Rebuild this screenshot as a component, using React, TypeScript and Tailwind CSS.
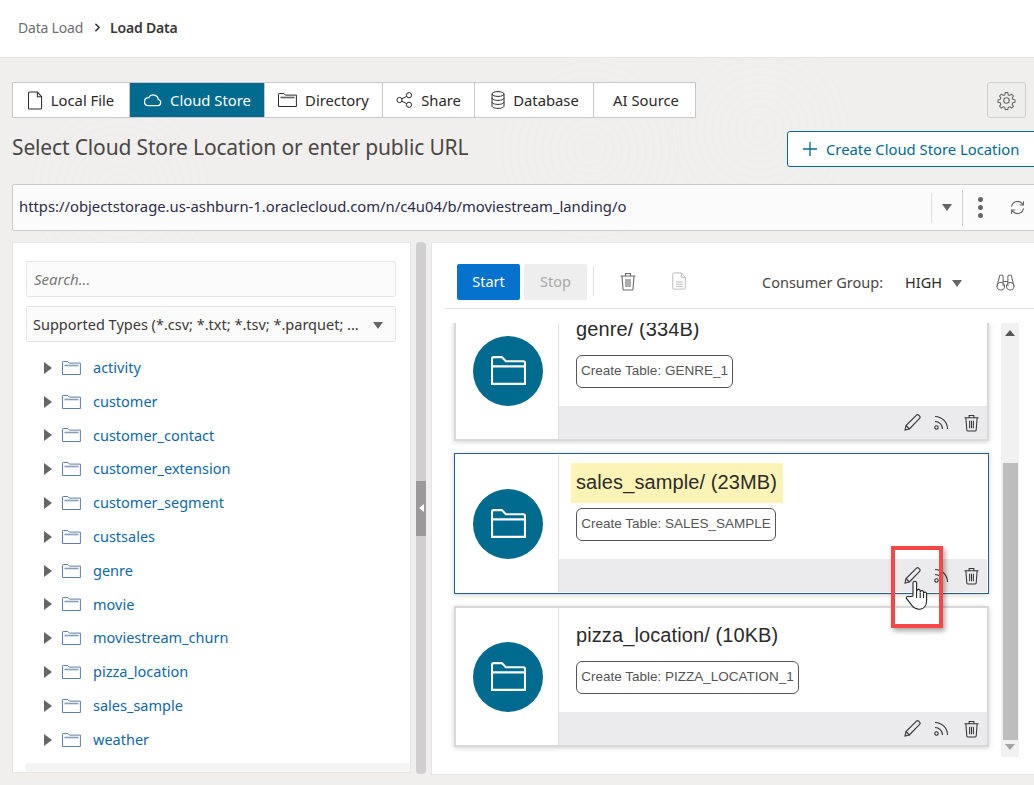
import React from "react";
import { ChevronRight } from "lucide-react";

const Sans = "font-['Noto_Sans','Open_Sans',sans-serif]";

function FileIco({ className = "", lines }: { className?: string; lines?: boolean }) {
  return (
    <svg viewBox="0 0 16 20" className={className} fill="none" stroke="currentColor" strokeWidth="1.1">
      <path d="M1.5 1h8.500l4.500 5v12a1 1 0 0 1-1 1h-12a1 1 0 0 1-1-1V2a1 1 0 0 1 1-1z" />
      <path d="M10 1v5h4.500" />
      {lines && <path d="M4 11h8M4 13.500h8M4 16h8" />}
    </svg>
  );
}
function CloudIco({ className = "" }: { className?: string }) {
  return (
    <svg viewBox="0 0 20 14" className={className} fill="none" stroke="currentColor" strokeWidth="1.3">
      <path d="M5 13h10.500a3.300 3.300 0 0 0 .6-6.500A5.400 5.400 0 0 0 6 4.500 4.300 4.300 0 0 0 5 13z" />
    </svg>
  );
}
function FolderIco({ className = "" }: { className?: string }) {
  return (
    <svg viewBox="0 0 19 14" className={className} fill="none" stroke="currentColor" strokeWidth="1">
      <path d="M.5 13.500V1.200a.7.7 0 0 1 .7-.7h4.600l1.600 1.600h11v11.400z" />
      <path d="M2.500 4.500h14" strokeWidth="1.600" opacity=".75" />
    </svg>
  );
}
function ShareIco({ className = "" }: { className?: string }) {
  return (
    <svg viewBox="0 0 17 16" className={className} fill="none" stroke="currentColor" strokeWidth="1">
      <circle cx="3.500" cy="8" r="2.600" />
      <circle cx="13" cy="3.200" r="2.600" />
      <circle cx="13" cy="12.800" r="2.600" />
      <path d="M5.800 6.800l4.900-2.400M5.800 9.200l4.900 2.400" />
    </svg>
  );
}
function DbIco({ className = "" }: { className?: string }) {
  return (
    <svg viewBox="0 0 14 18" className={className} fill="none" stroke="currentColor" strokeWidth="1">
      <ellipse cx="7" cy="3" rx="6" ry="2.400" />
      <path d="M1 3v12c0 1.400 2.700 2.400 6 2.400s6-1 6-2.400V3M1 7c0 1.400 2.700 2.400 6 2.400S13 8.400 13 7M1 11c0 1.400 2.700 2.400 6 2.400s6-1 6-2.400" />
    </svg>
  );
}
function TrashIco({ className = "" }: { className?: string }) {
  return (
    <svg viewBox="0 0 16 18" className={className} fill="none" stroke="currentColor" strokeWidth="1.100">
      <path d="M.5 3.500h15M5.500 3.500V1h5v2.500M2 3.500l1 13a1 1 0 0 0 1 1h8a1 1 0 0 0 1-1l1-13" />
      <path d="M6 6.500v8M8 6.500v8M10 6.500v8" />
    </svg>
  );
}
function PencilIco({ className = "" }: { className?: string }) {
  return (
    <svg viewBox="0 0 17 17" className={className} fill="none" stroke="currentColor" strokeWidth="1.100">
      <path d="M1 16l1-4.500L12.500 1.200a1.500 1.500 0 0 1 2.100 0l1 1a1.500 1.500 0 0 1 0 2.100L5.400 15z" />
      <path d="M2 11.500l3.400 3.500" />
    </svg>
  );
}
function RssIco({ className = "" }: { className?: string }) {
  return (
    <svg viewBox="0 0 15 15" className={className} fill="none" stroke="currentColor" strokeWidth="1.100">
      <circle cx="2.500" cy="12.500" r="1.700" />
      <path d="M1 6.500a7.500 7.500 0 0 1 7.500 7.500M1 1.500A12.500 12.500 0 0 1 13.500 14" />
    </svg>
  );
}
function CardFolder({ className = "" }: { className?: string }) {
  return (
    <svg viewBox="0 0 34 28" className={className} fill="none" stroke="currentColor" strokeWidth="2">
      <path d="M1 27V2.500A1.500 1.500 0 0 1 2.500 1h8l4 4h17A1.500 1.500 0 0 1 33 6.500V27z" />
      <path d="M1 10h32" />
    </svg>
  );
}
function Caret({ className = "" }: { className?: string }) {
  return <span className={`block w-0 h-0 border-x-[5.500px] border-x-transparent border-t-[7px] border-t-[#666] ${className}`} />;
}

function Tab({ icon, label, active, cls }: { icon?: React.ReactNode; label: string; active?: boolean; cls: string }) {
  return (
    <div className={`${cls} flex items-center justify-center gap-[8px] text-[14.800px] border-r last:border-r-0 border-[#c9c9c9] ${active ? "bg-[#006b8f] text-white" : "text-[#2c2a28]"}`}>
      {icon}
      <span>{label}</span>
    </div>
  );
}

const folders = ["activity","customer","customer_contact","customer_extension","customer_segment","custsales","genre","movie","moviestream_churn","pizza_location","sales_sample","weather"];

function Card({ title, table, selected, hl, w }: { title: string; table: string; selected?: boolean; hl?: boolean; w: string }) {
  return (
    <div className={`h-[141px] w-[535px] shrink-0 flex bg-white border-2 shadow-[0_1px_5px_rgba(0,0,0,0.18)] ${selected ? "border-white outline outline-[#1f5f93] -outline-offset-1" : "border-[#d9d9d9]"}`}>
      <div className="w-[103px] shrink-0 border-r border-[#e2e2e2] pl-[2px] flex items-center justify-center">
        <div className="w-[70px] h-[70px] rounded-full bg-[#006b8f] flex items-center justify-center text-white">
          <CardFolder className="w-[35px] h-[29px]" />
        </div>
      </div>
      <div className="flex-1 flex flex-col">
        <div className="flex-1 pl-[17px] font-['Liberation_Sans',sans-serif]">
          <div className={`h-[40px] mt-[8px] inline-flex items-center pb-[2px] text-[20px] tracking-[0.1px] text-[#2b2b2b] pl-[5px] pr-[6px] -ml-[5px] ${hl ? "bg-[#fbf4b6]" : ""}`}>{title}</div>
          <div className={`${w} h-[33px] mt-[5px] border border-[#555] rounded-[6px] flex items-center justify-center text-[13.500px] text-[#555] whitespace-nowrap`}>{table}</div>
        </div>
        <div className="h-[33px] bg-[#ebebed] flex items-center justify-end pr-[8px] text-[#333]">
          <PencilIco className="w-[17px] h-[17px]" />
          <RssIco className="w-[15px] h-[15px] ml-[13px]" />
          <TrashIco className="w-[15px] h-[18px] ml-[15px]" />
        </div>
      </div>
    </div>
  );
}

const ringSets = [
  { cx: 120, cy: 190 },
  { cx: 590, cy: 150 },
  { cx: 760, cy: 130 },
];

export default function App() {
  return (
    <div className={`w-[1034px] h-[785px] overflow-hidden bg-[#f0efed] flex flex-col relative isolate ${Sans}`}>
      <svg className="absolute inset-0 -z-10 w-full h-full" fill="none" stroke="#eeedeb" strokeWidth="1">
        {ringSets.map((s, i) => (
          <g key={i}>
            {[8, 16, 24, 32, 40, 48, 56, 64, 72, 80, 88].map((r) => (
              <circle key={r} cx={s.cx} cy={s.cy} r={r} />
            ))}
          </g>
        ))}
      </svg>
      <header className="h-[58px] shrink-0 bg-white border-b border-[#e4e4e4] flex items-center pl-[18px] text-[14px] tracking-[-0.2px] pb-[3px]">
        <span className="text-[#6f6f6f]">Data Load</span>
        <ChevronRight className="w-[13px] h-[13px] ml-[8px] mr-[6px] text-[#333]" strokeWidth={3} />
        <span className="font-semibold text-[#3b3936]">Load Data</span>
      </header>

      <div className="pl-[12px] pt-[24px] flex items-start justify-between pr-[8px]">
        <div className="flex h-[36px] w-[684px] border border-[#c9c9c9] bg-white">
          <Tab cls="w-[117px]" label="Local File" icon={<FileIco className="w-[15px] h-[19px]" />} />
          <Tab cls="w-[135px]" active label="Cloud Store" icon={<CloudIco className="w-[19px] h-[14px]" />} />
          <Tab cls="w-[118px]" label="Directory" icon={<FolderIco className="w-[19px] h-[14px]" />} />
          <Tab cls="w-[92px]" label="Share" icon={<ShareIco className="w-[17px] h-[16px]" />} />
          <Tab cls="w-[119px] pl-[2px]" label="Database" icon={<DbIco className="w-[14px] h-[18px]" />} />
          <Tab cls="flex-1 pl-[3px]" label="AI Source" />
        </div>
        <div className="w-[39px] h-[36px] border border-[#cfcfcf] rounded-[3px] bg-[#eeeeec] flex items-center justify-center text-[#666]">
          <svg viewBox="0 0 24 24" className="w-[19px] h-[19px]" fill="none" stroke="currentColor" strokeWidth="1.400">
            <path d="M10.300 1.500h3.400l.6 3 2 .8 2.500-1.700 2.400 2.400-1.700 2.500.8 2 3 .6v3.400l-3 .6-.8 2 1.700 2.500-2.400 2.400-2.500-1.700-2 .8-.6 3h-3.400l-.6-3-2-.8-2.500 1.700-2.400-2.400 1.700-2.500-.8-2-3-.6v-3.400l3-.6.8-2-1.700-2.500 2.400-2.400 2.500 1.700 2-.8z" transform="translate(.6 .6) scale(.95)" />
            <circle cx="12" cy="12" r="3.500" />
          </svg>
        </div>
      </div>

      <div className="pl-[12px] flex items-start mt-[13px] h-[48px]">
        <h1 className="text-[21px] leading-[32px] tracking-[-0.15px] font-normal text-[#4a4745] w-[775px] shrink-0 whitespace-nowrap">Select Cloud Store Location or enter public URL</h1>
        <div className="shrink-0 w-[260px] h-[36px] border border-[#006b8f] rounded-l-[3px] bg-white text-[#006b8f] flex items-center pl-[15px] gap-[9px] text-[14.800px] whitespace-nowrap">
          <svg viewBox="0 0 14 14" className="w-[14px] h-[14px]" stroke="currentColor" strokeWidth="1.300"><path d="M7 0v14M0 7h14" /></svg>
          <span className="pt-[1px]">Create Cloud Store Location</span>
        </div>
      </div>

      <div className="ml-[12px] mt-[5px] h-[47px] w-[1040px] shrink-0 bg-[#fbfbfb] border border-[#cacaca] rounded-[2px] flex items-center pl-[6px] text-[14.800px] text-[#2d2b4a]">
        <span className="w-[912px] shrink-0 pb-[2px]">https://objectstorage.us-ashburn-1.oraclecloud.com/n/c4u04/b/moviestream_landing/o</span>
        <div className="h-[30px] border-l border-[#dedede] w-[31px] flex items-center justify-center"><Caret /></div>
        <div className="h-[36px] border-l border-[#cfcfcf] w-[36px] flex flex-col items-center justify-center gap-[3px]">
          <span className="w-[5px] h-[5px] rounded-full bg-[#666]" />
          <span className="w-[5px] h-[5px] rounded-full bg-[#666]" />
          <span className="w-[5px] h-[5px] rounded-full bg-[#666]" />
        </div>
        <svg viewBox="0 0 20 20" className="w-[17px] h-[17px] ml-[11px] text-[#666]" fill="none" stroke="currentColor" strokeWidth="1.300">
          <path d="M3 9a7 7 0 0 1 12-4l2 2M17 11a7 7 0 0 1-12 4l-2-2" />
          <path d="M17 2.500V7h-4.500M3 17.500V13h4.500" />
        </svg>
      </div>

      <div className="flex-1 min-h-0 flex pl-[12px] pt-[11px] pb-[10px]">
        <aside className="w-[399px] mb-[2px] bg-white border border-[#e6e6e6] flex flex-col pl-[13px] pr-[14px] pt-[18px] shrink-0">
          <div className="h-[36px] border border-[#e6e6e6] rounded-[2px] bg-[#fbfbfb] flex items-center pl-[7px] text-[15px] italic text-[#7a7a7a] shrink-0">Search...</div>
          <div className="h-[36px] mt-[9px] border border-[#e6e6e6] rounded-[2px] bg-[#fbfbfb] flex items-center pl-[6px] pr-[12px] pt-[2px] justify-between text-[14.500px] text-[#3b3936] shrink-0">
            <span className="whitespace-nowrap">Supported Types (*.csv; *.txt; *.tsv; *.parquet; ...</span>
            <Caret />
          </div>
          <ul className="mt-[9px] flex flex-col flex-1">
            {folders.map((f) => (
              <li key={f} className="h-[33.800px] flex items-center shrink-0 text-[14.500px] text-[#0e69a8]">
                <span className="block ml-[18px] w-0 h-0 border-y-[6px] border-y-transparent border-l-[8px] border-l-[#666]" />
                <FolderIco className="w-[19px] h-[14px] ml-[10px] text-[#5f7fa8]" />
                <span className="ml-[12px]">{f}</span>
              </li>
            ))}
          </ul>
          <div className="-mr-[14px] h-[9px] bg-[#f5f5f5]" />
        </aside>

        <div className="w-[20px] shrink-0 flex justify-center">
          <div className="w-[10px] mb-[1px] rounded-[4px] bg-[#cfcfcf] flex flex-col justify-center">
            <div className="h-[55px] bg-[#9a9a9a] flex items-center justify-center">
              <span className="block w-0 h-0 border-y-[4px] border-y-transparent border-r-[5px] border-r-white" />
            </div>
          </div>
        </div>

        <main className="flex-1 -mr-[4px] bg-white border border-[#e6e6e6] flex flex-col min-w-0 pl-[13px]">
          <div className="h-[66px] shrink-0 border-b border-[#e3e3e3] flex items-start pl-[12px] pt-[21px] text-[14.500px]">
            <div className="w-[63px] h-[36px] rounded-[2px] bg-[#0572ce] text-white flex items-center justify-center">Start</div>
            <div className="w-[63px] h-[36px] ml-[4px] rounded-[2px] bg-[#eeeeee] text-[#a8a8a8] flex items-center justify-center">Stop</div>
            <div className="w-px h-[30px] mt-[2px] bg-[#e0e0e0] ml-[6px]" />
            <TrashIco className="w-[16px] h-[19px] mt-[8px] ml-[26px] text-[#6a6a6a]" />
            <FileIco lines className="w-[15px] h-[18px] mt-[8px] ml-[36px] text-[#bdbdbd]" />
            <span className="ml-[75px] mt-[1px] h-[36px] flex items-center text-[#4a4745]">Consumer Group:</span>
            <span className="ml-[22px] mt-[1px] h-[36px] flex items-center text-[#2c2a28]">HIGH</span>
            <Caret className="ml-[10px] mt-[16px]" />
            <svg viewBox="0 0 20 18" className="w-[19px] h-[17px] mt-[10px] ml-[34px] text-[#666]" fill="none" stroke="currentColor" strokeWidth="1.100">
              <circle cx="5" cy="13" r="4" />
              <circle cx="15" cy="13" r="4" />
              <path d="M1 13L3.500 3a2 2 0 0 1 4 0v10M19 13L16.500 3a2 2 0 0 0-4 0v10M7.500 8h5" />
            </svg>
          </div>
          <div className="flex mt-[14px] h-[434px] overflow-hidden relative">
            <div className="w-[556px] shrink-0 pl-[9px] overflow-hidden">
              <div className="flex flex-col gap-[12px] -mt-[23px]">
                <Card title="genre/ (334B)" table="Create Table: GENRE_1" w="w-[157px]" />
                <Card title="sales_sample/ (23MB)" table="Create Table: SALES_SAMPLE" w="w-[200px]" selected hl />
                <Card title="pizza_location/ (10KB)" table="Create Table: PIZZA_LOCATION_1" w="w-[223px]" />
              </div>
            </div>
            <div className="w-[18px] shrink-0 bg-[#f1f1f1] flex flex-col items-center">
              <span className="block mt-[7px] w-0 h-0 border-x-[5px] border-x-transparent border-b-[6px] border-b-[#555]" />
              <div className="w-[15px] h-[277px] mt-[127px] bg-[#bdbdbd]" />
              <span className="block mt-[4px] w-0 h-0 border-x-[5px] border-x-transparent border-t-[6px] border-t-[#a3a3a3]" />
            </div>

            <div className="absolute left-[446px] top-[223px] w-[52px] h-[82px] border-[4px] border-[#f64747] shadow-[2px_3px_5px_rgba(0,0,0,0.35)] pointer-events-none" />
            <svg viewBox="0 0 24 32" className="absolute left-[460px] top-[256px] w-[24px] h-[32px]" fill="white" stroke="#222" strokeWidth="1.100">
              <path d="M8 17V4a1.800 1.800 0 0 1 3.600 0v9l.3-1.500a1.700 1.700 0 0 1 3.300.500v1l.3-.6a1.600 1.600 0 0 1 3 .7v1l.4-.4a1.500 1.500 0 0 1 2.700 1v7c0 4.500-2.500 8-6.500 8.500-3.500.3-6-1-8-3.500l-5.500-7c-1-1.600 1.200-3.200 2.700-2z" />
              <path d="M11.600 13v6M15.200 13.500v5.500M18.500 15v4" />
            </svg>
          </div>
        </main>
      </div>
    </div>
  );
}
